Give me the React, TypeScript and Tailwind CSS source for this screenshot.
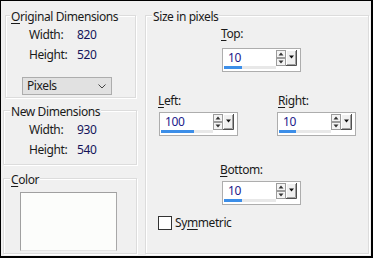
import type { ReactNode } from 'react';

const font = { fontFamily: '"Noto Sans", "Open Sans", sans-serif' };

function Group({
  label,
  labelClass,
  className,
  children,
}: {
  label: ReactNode;
  labelClass: string;
  className: string;
  children?: ReactNode;
}) {
  return (
    <div className={`border border-[#dcdcdc] shadow-[inset_1px_1px_0_#fff,1px_1px_0_#fff] ${className}`}>
      <div className={`-mt-[7px] w-fit bg-[#f0f0f0] px-[1px] leading-[16px] text-[#1a1a1a] ${labelClass}`}>{label}</div>
      {children}
    </div>
  );
}

function U({ children }: { children: ReactNode }) {
  return <span className="underline underline-offset-2">{children}</span>;
}

function Spinner() {
  return (
    <svg width="10" height="16" viewBox="0 0 10 16" className="shrink-0">
      <rect x="0.5" y="0.5" width="9" height="7" fill="#f4f4f4" stroke="#9c9c9c" />
      <path d="M2.5 5.5 L5 2.5 L7.5 5.5 Z" fill="#333" />
      <rect x="0.5" y="8.5" width="9" height="7" fill="#f4f4f4" stroke="#9c9c9c" />
      <path d="M2.5 10.5 L5 13.5 L7.5 10.5 Z" fill="#333" />
    </svg>
  );
}

function DropBtn() {
  return (
    <svg width="11" height="16" viewBox="0 0 11 16" className="shrink-0">
      <rect x="0" y="0" width="11" height="16" fill="#f0f0f0" />
      <path d="M0.5 15.5 V0.5 H10" stroke="#fff" fill="none" />
      <path d="M10.5 0 V15.5 H0" stroke="#505050" fill="none" />
      <path d="M9.5 1 V14.5 H1" stroke="#a0a0a0" fill="none" />
      <path d="M3 5.5 H8 L5.5 8.5 Z" fill="#111" />
    </svg>
  );
}

function SpinBox({ value, bar, className = '' }: { value: string; bar: string; className?: string }) {
  return (
    <div className={`flex h-[24px] w-[79px] flex-col border border-[#adadad] bg-white pl-[1px] pr-[3px] pt-[1px] ${className}`}>
      <div className="flex h-[16px]">
        <span className="flex-1 pl-[4px] text-[12px] leading-[16px] text-[#22208a]">{value}</span>
        <Spinner />
        <DropBtn />
      </div>
      <div className="h-[3px] w-[52px] bg-[#e8e8e8]">
        <div className={`h-full bg-[#3c8ee8] ${bar}`} />
      </div>
    </div>
  );
}

function DimRows({ width, height, pad }: { width: string; height: string; pad: string }) {
  return (
    <div className={`flex flex-col text-[#1a1a1a] ${pad}`}>
      <div className="flex h-[20px] leading-[20px]">
        <span className="w-[48px]">Width:</span>
        <span className="text-[#14145a]">{width}</span>
      </div>
      <div className="flex h-[20px] leading-[20px]">
        <span className="w-[48px]">Height:</span>
        <span className="text-[#14145a]">{height}</span>
      </div>
    </div>
  );
}

export default function App() {
  return (
    <div
      style={font}
      className="flex h-[258px] w-[373px] items-start overflow-hidden border-b-2 border-l border-r-2 border-t border-black bg-[#f0f0f0] pt-[14px] text-[12px] tracking-[-0.4px]"
    >
      {/* left column */}
      <div className="flex w-[140px] shrink-0 flex-col">
        <Group label={<><U>O</U>riginal Dimensions</>} labelClass="ml-[4px]" className="ml-[4px] h-[83px] w-[131px]">
          <DimRows width="820" height="520" pad="pl-[23px]" />
          <div className="ml-[16px] mt-[12px] flex h-[18px] w-[90px] items-center border border-[#adadad] bg-[#e1e1e1] pl-[4px] pr-[5px] text-[#1a1a1a]">
            <span className="flex-1 leading-[16px]">Pixels</span>
            <svg width="8" height="5" viewBox="0 0 8 5">
              <path d="M0.5 0.5 L4 4 L7.5 0.5" stroke="#444" fill="none" />
            </svg>
          </div>
        </Group>

        <Group label="New Dimensions" labelClass="ml-[6px]" className="ml-[2px] mt-[12px] h-[55px] w-[134px]">
          <DimRows width="930" height="540" pad="pl-[25px]" />
        </Group>

        <Group label={<><U>C</U>olor</>} labelClass="ml-[6px]" className="ml-[2px] mt-[13px] h-[76px] w-[134px]">
          <div className="ml-[16px] mt-[4px] h-[59px] w-[97px] border border-b-[#e2e2e2] border-l-[#a0a0a0] border-r-[#a8a8a8] border-t-[#a0a0a0] bg-[#fcfdfb]" />
        </Group>
      </div>

      {/* right column */}
      <Group label="Size in pixels" labelClass="ml-[6px]" className="ml-[4px] h-[239px] w-[224px]">
        <div className="flex flex-col text-[#1a1a1a]">
          <div className="ml-[75px] mt-[1px] flex flex-col">
            <span className="leading-[16px]"><U>T</U>op:</span>
            <SpinBox value="10" bar="w-[18px]" className="ml-[1px] mt-[6px]" />
          </div>

          <div className="mt-[21px] flex pl-[12px]">
            <div className="flex w-[80px] flex-col">
              <span className="leading-[16px]"><U>L</U>eft:</span>
              <SpinBox value="100" bar="w-[33px]" className="ml-[1px] mt-[3px]" />
            </div>
            <div className="ml-[39px] flex flex-col">
              <span className="ml-[1px] leading-[16px]"><U>R</U>ight:</span>
              <SpinBox value="10" bar="w-[17px]" className="mt-[3px]" />
            </div>
          </div>

          <div className="ml-[74px] mt-[26px] flex flex-col">
            <span className="leading-[16px]"><U>B</U>ottom:</span>
            <SpinBox value="10" bar="w-[18px]" className="ml-[2px] mt-[3px]" />
          </div>

          <div className="mt-[10px] flex items-center pl-[12px]">
            <div className="h-[14px] w-[14px] border border-[#333] bg-white" />
            <span className="ml-[3px] leading-[16px]">Sy<U>m</U>metric</span>
          </div>
        </div>
      </Group>
    </div>
  );
}
